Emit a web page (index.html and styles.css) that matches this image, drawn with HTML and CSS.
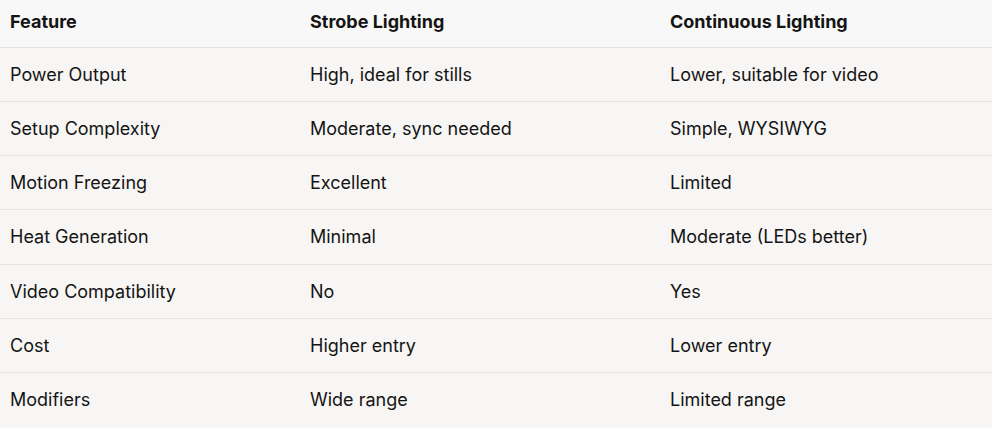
FILE: index.html
```html
<!DOCTYPE html>
<html>
<head>
<meta charset="utf-8">
<link rel="stylesheet" href="styles.css">
</head>
<body>
<table class="cmp">
  <colgroup><col class="c1"><col class="c2"><col class="c3"></colgroup>
  <thead>
    <tr><th>Feature</th><th>Strobe Lighting</th><th>Continuous Lighting</th></tr>
  </thead>
  <tbody>
    <tr><td>Power Output</td><td>High, ideal for stills</td><td>Lower, suitable for video</td></tr>
    <tr><td>Setup Complexity</td><td>Moderate, sync needed</td><td>Simple, WYSIWYG</td></tr>
    <tr><td>Motion Freezing</td><td>Excellent</td><td>Limited</td></tr>
    <tr><td>Heat Generation</td><td>Minimal</td><td>Moderate (LEDs better)</td></tr>
    <tr><td>Video Compatibility</td><td>No</td><td>Yes</td></tr>
    <tr><td>Cost</td><td>Higher entry</td><td>Lower entry</td></tr>
    <tr><td>Modifiers</td><td>Wide range</td><td>Limited range</td></tr>
  </tbody>
</table>
</body>
</html>
```
FILE: styles.css
```css
html, body {
  margin: 0;
  padding: 0;
  background: #f7f6f4;
}
body {
  font-family: Inter, "Liberation Sans", sans-serif;
  color: #141414;
  font-size: 18px;
}
.cmp {
  width: 992px;
  border-collapse: collapse;
  table-layout: fixed;
}
.c1 { width: 300px; }
.c2 { width: 360px; }
.c3 { width: 332px; }
.cmp th, .cmp td {
  text-align: left;
  padding: 0 0 0 10px;
  line-height: 24px;
  white-space: nowrap;
}
.cmp thead tr {
  background: #f8f8f8;
}
.cmp th {
  font-weight: 700;
  padding-top: 10px;
  padding-bottom: 13px;
  border-bottom: 1px solid #e2e2e1;
}
.cmp td {
  padding-top: 15px;
  padding-bottom: 14.17px;
  border-bottom: 1px solid #e4e3e1;
}
.cmp tbody tr:last-child td {
  border-bottom: none;
}
```
